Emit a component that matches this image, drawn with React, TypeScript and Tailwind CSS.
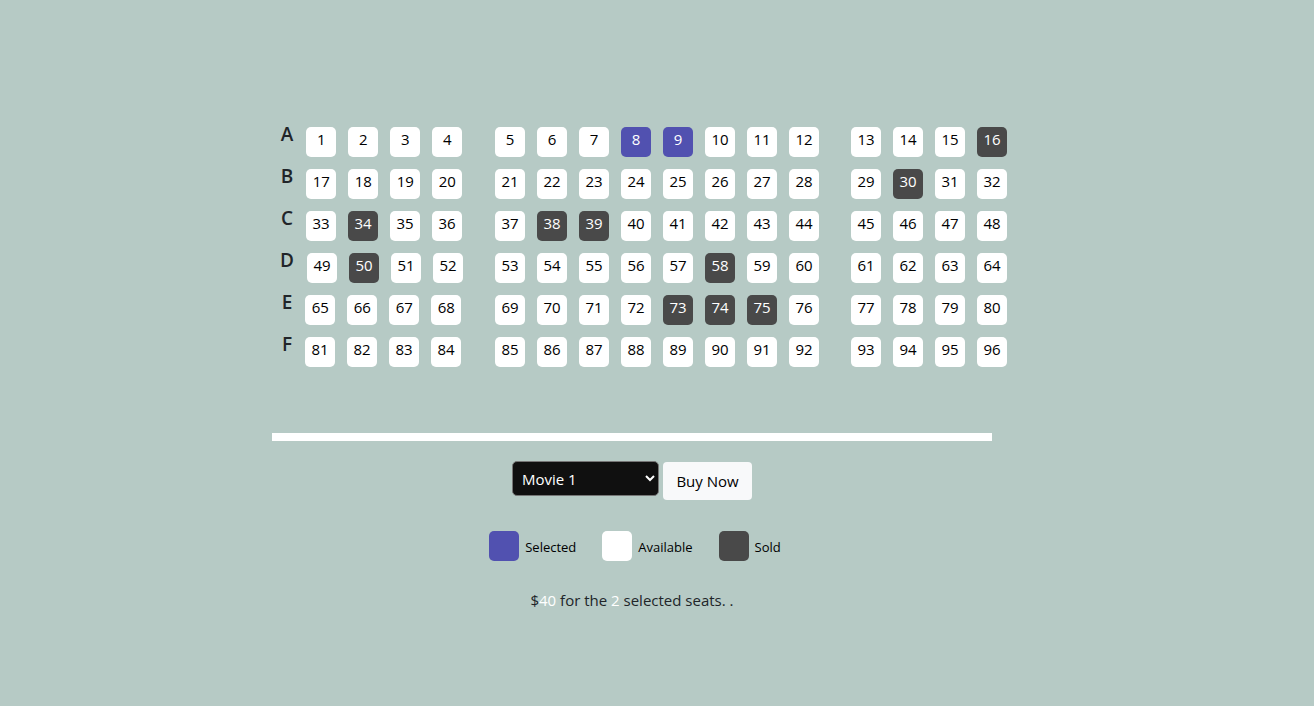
import { useState } from "react";

const ROWS = ["A", "B", "C", "D", "E", "F"];
const SEATS_PER_ROW = 16;
const SOLD = new Set([16, 30, 34, 38, 39, 50, 58, 73, 74, 75]);
const MOVIES = [
  { name: "Movie 1", price: 20 },
  { name: "Movie 2", price: 25 },
  { name: "Movie 3", price: 30 },
];

const range = (start: number, count: number) =>
  Array.from({ length: count }, (_, i) => start + i);

type SeatProps = {
  number: number;
  selected: boolean;
  onToggle: (n: number) => void;
};

function Seat({ number, selected, onToggle }: SeatProps) {
  const sold = SOLD.has(number);
  const look = sold
    ? "bg-[#494949] text-white"
    : selected
      ? "bg-[#5151b0] text-white"
      : "bg-white text-black";
  return (
    <button
      type="button"
      disabled={sold}
      aria-pressed={selected}
      onClick={() => onToggle(number)}
      className={`size-[30px] shrink-0 rounded-[5px] pb-1.5 text-center text-[15px] leading-6 ${look}`}
    >
      {number}
    </button>
  );
}

function LegendItem({ color, label }: { color: string; label: string }) {
  return (
    <li className="flex items-center gap-1.5">
      <span className={`size-[30px] rounded-[5px] ${color}`} />
      <span className="pt-1 text-[13px] text-black">{label}</span>
    </li>
  );
}

export default function App() {
  const [selected, setSelected] = useState<number[]>([8, 9]);
  const [movie, setMovie] = useState(0);

  const toggle = (n: number) =>
    setSelected((s) => (s.includes(n) ? s.filter((x) => x !== n) : [...s, n]));

  const seats = (start: number, count: number) => (
    <div className="flex gap-3">
      {range(start, count).map((n) => (
        <Seat key={n} number={n} selected={selected.includes(n)} onToggle={toggle} />
      ))}
    </div>
  );

  return (
    <div className="min-h-screen bg-[#b6cac5] pt-[127px] pr-[50px] pb-16 font-['Open_Sans','Noto_Sans',sans-serif] text-[#212529]">
      <main className="mx-auto w-full max-w-[720px]">
        <div className="flex flex-col gap-3">
          {ROWS.map((row, r) => {
            const first = r * SEATS_PER_ROW + 1;
            return (
              <div key={row} className="flex">
                <div className="mr-6 flex w-[199px] shrink-0 justify-center gap-[13px]">
                  <h2 className="text-[19px] leading-[14px] font-semibold">{row}</h2>
                  {seats(first, 4)}
                </div>
                {seats(first + 4, 8)}
                <div className="ml-8">{seats(first + 12, 4)}</div>
              </div>
            );
          })}
        </div>

        <div className="mt-[66px] h-2 bg-white" />

        <div className="mt-5 flex items-start justify-center gap-1">
          <select
            aria-label="Movie"
            value={movie}
            onChange={(e) => setMovie(Number(e.target.value))}
            className="h-[35px] w-[147px] rounded-[5px] border border-[#767676] bg-[#101010] px-[5px] text-[15px] text-white"
          >
            {MOVIES.map((m, i) => (
              <option key={m.name} value={i}>
                {m.name}
              </option>
            ))}
          </select>
          <button
            type="button"
            className="mt-px h-[38px] w-[89px] rounded-sm bg-[#f8f9fa] text-[15px] whitespace-nowrap text-black"
          >
            Buy Now
          </button>
        </div>

        <ul className="mt-[31px] ml-1.5 flex justify-center gap-[26px]">
          <LegendItem color="bg-[#5151b0]" label="Selected" />
          <LegendItem color="bg-white" label="Available" />
          <LegendItem color="bg-[#494949]" label="Sold" />
        </ul>

        <p className="mt-[27px] text-center text-[15px] leading-6">
          $<span className="text-white">{selected.length * MOVIES[movie].price}</span> for the{" "}
          <span className="text-white">{selected.length}</span> selected seats. .
        </p>
      </main>
    </div>
  );
}
